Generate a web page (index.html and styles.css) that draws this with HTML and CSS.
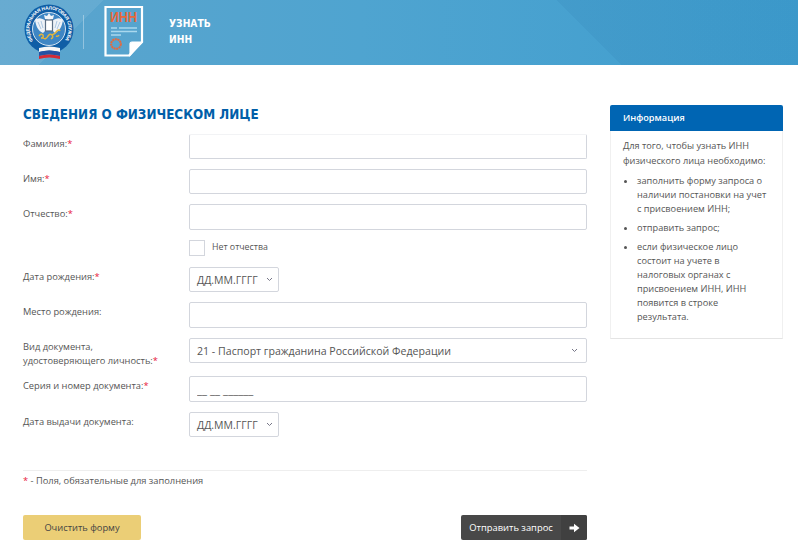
FILE: index.html
```html
<!doctype html>
<html lang="ru">
  <head>
    <meta charset="UTF-8" />
    <meta name="viewport" content="width=device-width, initial-scale=1.0" />
    <title>Узнать ИНН</title>
    <link rel="stylesheet" href="styles.css">
  </head>
  <body>
    <header class="top-bar">
      <svg class="emblem" width="52" height="58" viewBox="0 0 52 58">
        <circle cx="26" cy="26" r="24.5" fill="#0f5ea6" />
        <circle cx="26" cy="26" r="16.5" fill="#3f86c4" stroke="#fff" stroke-width="0.8" />
        <defs>
          <path id="emblem-arc" d="M10.4 37.7 A19.5 19.5 0 1 1 41.6 37.7" />
        </defs>
        <text class="emblem-text"><textPath href="#emblem-arc" textLength="85" lengthAdjust="spacing">ФЕДЕРАЛЬНАЯ НАЛОГОВАЯ СЛУЖБА</textPath></text>
        <path d="M26 10 l2 3 l3 -1 l-1 4 l-4 1 l-4 -1 l-1 -4 l3 1z" fill="#f2f5f9" />
        <path d="M23 18 C18 14 14 15 12 17 C13 23 15 28 20 30 L23 27z M29 18 C34 14 38 15 40 17 C39 23 37 28 32 30 L29 27z" fill="#eef2f7" />
        <path d="M15 19 l3 7 M18 18 l2 7 M37 19 l-3 7 M34 18 l-2 7" stroke="#8fb4d8" stroke-width="0.7" />
        <rect x="22.5" y="17" width="7" height="11" fill="#fff" stroke="#5c6f85" stroke-width="1.2" />
        <path d="M16 33 q2 -3 4 -1 q1 3 -2 3 M20 35 q3 2 5 -2 q2 -3 4 -1 q2 2 -1 4 M29 32 q3 -1 5 -4 q2 -2 3 0 M33 33 q2 1 3 -1" fill="none" stroke="#e3b43c" stroke-width="1.5" />
        <path d="M16 45 q10 -3 21 0 v4 q-11 -3 -21 0z" fill="#f6f6f6" />
        <path d="M16 49 q10 -3 21 0 v4 q-11 -3 -21 0z" fill="#2452a4" />
        <path d="M16 53 q10 -3 21 0 v3 q-11 -3 -21 0z" fill="#d42a36" />
      </svg>
      <span class="top-divider"></span>
      <svg class="doc-icon" width="40" height="52" viewBox="0 0 40 52">
        <path d="M1.5 2 H38 V37 L25 50.5 H1.5z" fill="none" stroke="#fff" stroke-width="2.2" />
        <path d="M38 37 H28 Q26 37 26 39 V50.5z" fill="#fff" stroke="#fff" stroke-width="1.2" />
        <text class="doc-text" x="6" y="17" textLength="27" lengthAdjust="spacingAndGlyphs">ИНН</text>
        <path d="M7 23 h6 M15 23 h18 M7 26.5 h26 M7 30 h10" stroke="#a9d8ee" stroke-width="1.5" />
        <circle cx="12" cy="39" r="4.8" fill="none" stroke="#e8683a" stroke-width="2" stroke-dasharray="2 0.6" />
      </svg>
      <div class="top-title">УЗНАТЬ<br />ИНН</div>
    </header>

    <main class="page">
      <section class="form-col">
        <h1 class="form-title">СВЕДЕНИЯ О ФИЗИЧЕСКОМ ЛИЦЕ</h1>

        <div class="row">
          <label class="row-label">Фамилия:<span class="req">*</span></label>
          <input class="text-input no-top" type="text" />
        </div>
        <div class="row">
          <label class="row-label">Имя:<span class="req">*</span></label>
          <input class="text-input" type="text" />
        </div>
        <div class="row">
          <label class="row-label">Отчество:<span class="req">*</span></label>
          <input class="text-input tall" type="text" />
        </div>
        <div class="row row-check">
          <span class="row-label"></span>
          <span class="check-box"></span>
          <span class="check-text">Нет отчества</span>
        </div>
        <div class="row">
          <label class="row-label">Дата рождения:<span class="req">*</span></label>
          <div class="date-field">
            <span class="date-value">ДД.ММ.ГГГГ</span>
            <span class="date-btn">
              <svg width="7" height="5" viewBox="0 0 7 5"><path d="M1 1 L3.5 3.5 L6 1" fill="none" stroke="#778" stroke-width="1" /></svg>
            </span>
          </div>
        </div>
        <div class="row">
          <label class="row-label">Место рождения:</label>
          <input class="text-input tall" type="text" />
        </div>
        <div class="row row-two">
          <label class="row-label">Вид документа,<br />удостоверяющего личность:<span class="req">*</span></label>
          <div class="select-field">
            <span>21 - Паспорт гражданина Российской Федерации</span>
            <svg width="7" height="5" viewBox="0 0 7 5"><path d="M1 1 L3.5 3.5 L6 1" fill="none" stroke="#778" stroke-width="1" /></svg>
          </div>
        </div>
        <div class="row">
          <label class="row-label">Серия и номер документа:<span class="req">*</span></label>
          <input class="text-input tall" type="text" value="__ __ ______" />
        </div>
        <div class="row">
          <label class="row-label">Дата выдачи документа:</label>
          <div class="date-field">
            <span class="date-value">ДД.ММ.ГГГГ</span>
            <span class="date-btn">
              <svg width="7" height="5" viewBox="0 0 7 5"><path d="M1 1 L3.5 3.5 L6 1" fill="none" stroke="#778" stroke-width="1" /></svg>
            </span>
          </div>
        </div>

        <p class="form-note"><span class="req">*</span> - Поля, обязательные для заполнения</p>

        <div class="form-actions">
          <button class="btn-clear" type="button">Очистить форму</button>
          <button class="btn-send" type="button">
            <span class="btn-send-text">Отправить запрос</span>
            <span class="btn-send-arrow">
              <svg width="11" height="10" viewBox="0 0 11 10"><path d="M0.5 3.5 H5 V0.8 L10.5 5 L5 9.2 V6.5 H0.5z" fill="#fff" /></svg>
            </span>
          </button>
        </div>
      </section>

      <aside class="info-col">
        <div class="info-head">Информация</div>
        <div class="info-body">
          <p>Для того, чтобы узнать ИНН физического лица необходимо:</p>
          <ul>
            <li>заполнить форму запроса о наличии постановки на учет с присвоением ИНН;</li>
            <li>отправить запрос;</li>
            <li>если физическое лицо состоит на учете в налоговых органах с присвоением ИНН, ИНН появится в строке результата.</li>
          </ul>
        </div>
      </aside>
    </main>
  </body>
</html>
```
FILE: styles.css
```css
body {
  font-family: "Open Sans", Arial, sans-serif;
  font-size: 10px;
  color: #555;
  margin: 0;
  padding: 0;
  background-color: #fff;
}
.top-bar {
  display: flex;
  align-items: flex-start;
  height: 65px;
  padding-left: 23px;
  box-sizing: border-box;
  background-color: #4ba2d0;
  background-image:
    linear-gradient(135deg, rgba(255, 255, 255, 0.08) 0, rgba(255, 255, 255, 0.08) 12%, transparent 12%, transparent 100%),
    linear-gradient(45deg, transparent 0, transparent 72%, rgba(0, 60, 120, 0.06) 72%, rgba(0, 60, 120, 0.06) 100%),
    linear-gradient(90deg, #5ba4cd 0, #4fa4d0 45%, #3f9ecf 100%);
}
.emblem {
  margin-top: 3px;
}
.emblem-text {
  font-family: "Liberation Sans", Arial, sans-serif;
  font-size: 4.8px;
  font-weight: bold;
  fill: #fff;
}
.top-divider {
  width: 1px;
  height: 34px;
  margin: 15px 0 0 8px;
  background-color: rgba(255, 255, 255, 0.35);
}
.doc-icon {
  margin: 5px 0 0 20px;
}
.doc-text {
  font-family: "Liberation Sans", Arial, sans-serif;
  font-size: 14px;
  font-weight: bold;
  fill: #e8683a;
}
.top-title {
  margin: 16px 0 0 25px;
  font-family: "DejaVu Sans Condensed", "Roboto", sans-serif;
  font-size: 11px;
  font-weight: bold;
  line-height: 16px;
  color: #fff;
  transform: scaleX(0.93);
  transform-origin: left;
}
.page {
  display: flex;
  gap: 23px;
  padding: 40px 15px 0 23px;
}
.form-col {
  width: 564px;
  flex: none;
}
.form-title {
  margin: 0 0 10px;
  font-family: "DejaVu Sans Condensed", "Roboto", sans-serif;
  font-size: 14.5px;
  font-weight: bold;
  line-height: 19px;
  color: #005ea8;
  white-space: nowrap;
  transform: scaleX(0.92);
  transform-origin: left;
}
.row {
  display: flex;
  margin-bottom: 10px;
}
.row-two {
  margin-bottom: 9px;
}
.row-check {
  margin-bottom: 11px;
  align-items: center;
}
.row-label {
  width: 166px;
  flex: none;
  padding-top: 3px;
  line-height: 14px;
  font-size: 9.3px;
}
.row-two .row-label {
  padding-top: 2px;
  line-height: 13.5px;
}
.row-check .row-label {
  padding-top: 0;
}
.req {
  color: #e8173c;
}
.text-input {
  width: 398px;
  height: 25px;
  box-sizing: border-box;
  margin: 0;
  padding: 0 7px;
  border: 1px solid #d3d6dd;
  border-radius: 2px;
  background-color: #fff;
  font-family: "Open Sans", Arial, sans-serif;
  font-size: 11.5px;
  color: #555;
}
.text-input.tall {
  height: 26px;
}
.text-input.no-top {
  border-top-color: #f2f3f5;
}
.check-box {
  width: 16px;
  height: 16px;
  box-sizing: border-box;
  border: 1px solid #d3d6dd;
}
.check-text {
  margin: -3px 0 0 7px;
  font-size: 8.8px;
}
.date-field {
  display: flex;
  width: 90px;
  height: 25px;
  box-sizing: border-box;
  border: 1px solid #d3d6dd;
  border-radius: 2px;
}
.date-value {
  flex: 1;
  padding-left: 7px;
  font-size: 10.5px;
  line-height: 25px;
  white-space: nowrap;
}
.date-btn {
  display: flex;
  align-items: center;
  justify-content: center;
  width: 17px;
  flex: none;
}
.select-field {
  display: flex;
  align-items: center;
  justify-content: space-between;
  width: 398px;
  height: 25px;
  box-sizing: border-box;
  padding: 0 8px 0 7px;
  border: 1px solid #d3d6dd;
  border-radius: 2px;
  font-size: 10.6px;
}
.form-note {
  margin: 33px 0 0;
  padding-top: 3px;
  border-top: 1px solid #eee;
  font-size: 9.3px;
  line-height: 13px;
}
.form-actions {
  display: flex;
  justify-content: space-between;
  margin-top: 28px;
}
.btn-clear {
  width: 118px;
  height: 25px;
  padding: 0;
  border: none;
  border-radius: 2px;
  background-color: #ebce76;
  font-family: "Open Sans", Arial, sans-serif;
  font-size: 9.3px;
  color: #444;
}
.btn-send {
  display: flex;
  width: 126px;
  height: 25px;
  padding: 0;
  border: none;
  border-radius: 2px;
  background-color: #484848;
  font-family: "Open Sans", Arial, sans-serif;
  font-size: 9.4px;
  color: #fff;
}
.btn-send-text {
  flex: 1;
  line-height: 25px;
  text-align: center;
}
.btn-send-arrow {
  display: flex;
  align-items: center;
  justify-content: center;
  width: 26px;
  height: 25px;
  background-color: #404040;
  border-radius: 0 2px 2px 0;
}
.info-col {
  width: 173px;
  flex: none;
}
.info-head {
  height: 26px;
  padding-left: 13px;
  background-color: #0065b3;
  border-radius: 2px 2px 0 0;
  font-size: 9.2px;
  font-weight: 600;
  line-height: 25px;
  color: #fff;
}
.info-body {
  height: 208px;
  box-sizing: border-box;
  padding: 7px 13px 0 12px;
  border: 1px solid #f0f0f0;
  border-top: none;
  border-bottom: 1px solid #e4e4e4;
  font-size: 9.2px;
  line-height: 14px;
}
.info-body p {
  margin: 0 0 6px;
  line-height: 15px;
}
.info-body ul {
  margin: 0;
  padding-left: 14px;
}
.info-body li {
  margin-bottom: 5px;
}
```
